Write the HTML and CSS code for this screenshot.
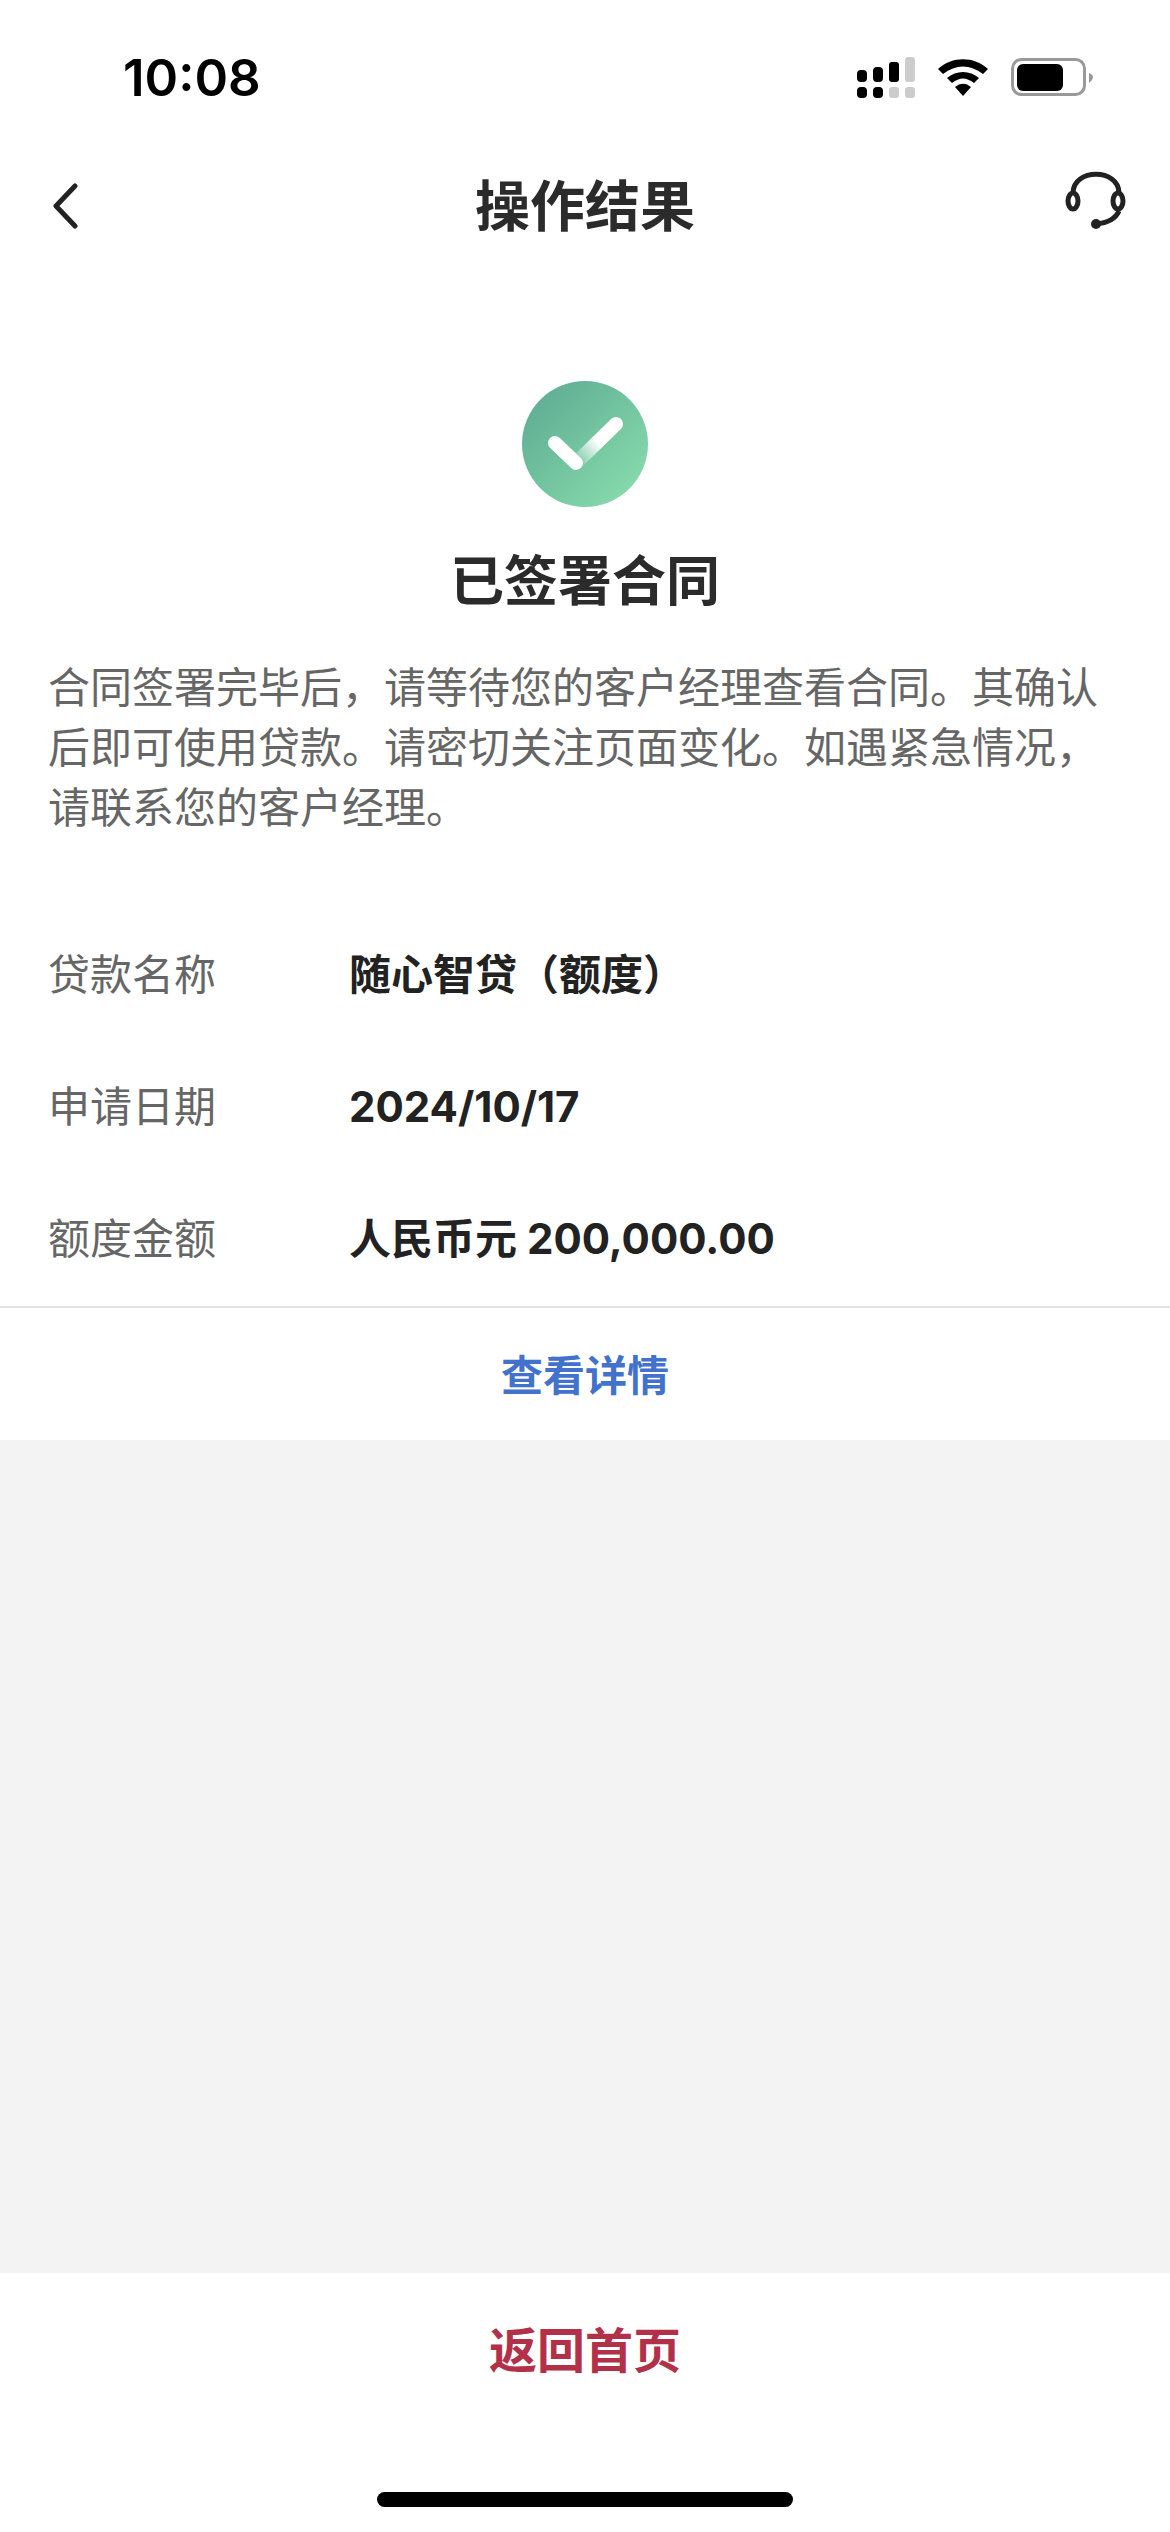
FILE: index.html
```html
<!DOCTYPE html>
<html lang="zh-CN">
<head>
    <meta charset="UTF-8">
    <meta name="viewport" content="width=device-width, initial-scale=1.0">
    <title>操作结果</title>
    <link rel="stylesheet" href="styles.css">
</head>
<body>

<div class="page">
    <div class="status-bar">
        <span class="time">10:08</span>
        <div class="status-icons">
            <svg class="signal" width="58" height="41" viewBox="0 0 58 41">
                <rect x="0" y="13" width="10" height="12" rx="4" fill="#000"/>
                <rect x="16" y="10" width="10" height="15" rx="4" fill="#000"/>
                <rect x="32" y="5" width="10" height="20" rx="3" fill="#000"/>
                <rect x="48" y="0" width="10" height="25" rx="3" fill="#ccc"/>
                <rect x="0" y="30" width="10" height="11" rx="4" fill="#000"/>
                <rect x="16" y="30" width="10" height="11" rx="4" fill="#000"/>
                <rect x="32" y="30" width="10" height="11" rx="3" fill="#ccc"/>
                <rect x="48" y="30" width="10" height="11" rx="3" fill="#ccc"/>
            </svg>
            <svg class="wifi" width="50" height="37" viewBox="0 0 50 37">
                <path d="M0 10 C14 -3 36 -3 50 10 L45 15 C32 5 18 5 5 15 Z" fill="#000"/>
                <path d="M9 19 C18 11 32 11 41 19 L36 24 C28 18 22 18 14 24 Z" fill="#000"/>
                <path d="M17 28 C22 23.500 28 23.500 33 28 L25 37 Z" fill="#000"/>
            </svg>
            <svg class="battery" width="82" height="38" viewBox="0 0 82 38">
                <rect x="1.500" y="1.500" width="72" height="35" rx="9" fill="none" stroke="#999" stroke-width="3"/>
                <rect x="6" y="6" width="46" height="27" rx="6" fill="#000"/>
                <path d="M78 15 C81 16 82 18 82 19 C82 20 81 23 78 25 Z" fill="#999"/>
            </svg>
        </div>
    </div>

    <div class="nav-bar">
        <svg class="back" width="26" height="46" viewBox="0 0 26 46">
            <path d="M23 3 L4 23 L23 43" fill="none" stroke="#222" stroke-width="5" stroke-linecap="round" stroke-linejoin="round"/>
        </svg>
        <h1>操作结果</h1>
        <svg class="service" width="62" height="58" viewBox="0 0 62 58">
            <path d="M8 22 C8 -3 54 -3 54 22" fill="none" stroke="#222" stroke-width="5"/>
            <ellipse cx="8" cy="30" rx="5" ry="8" fill="none" stroke="#222" stroke-width="5"/>
            <ellipse cx="53" cy="30" rx="5" ry="8" fill="none" stroke="#222" stroke-width="5"/>
            <path d="M54 40 C50 49 42 52 31 53" fill="none" stroke="#222" stroke-width="5"/>
            <circle cx="31" cy="53" r="5" fill="#222"/>
        </svg>
    </div>

    <div class="result">
        <svg class="result-icon" width="126" height="126" viewBox="0 0 126 126">
            <defs>
                <linearGradient id="circleFill" x1="0.150" y1="0.150" x2="0.850" y2="0.850">
                    <stop offset="0" stop-color="#62b096"/>
                    <stop offset="1" stop-color="#84d8aa"/>
                </linearGradient>
                <linearGradient id="tickFade" gradientUnits="userSpaceOnUse" x1="54" y1="82" x2="94" y2="43">
                    <stop offset="0" stop-color="#fff" stop-opacity="0"/>
                    <stop offset="0.550" stop-color="#fff"/>
                </linearGradient>
            </defs>
            <circle cx="63" cy="63" r="63" fill="url(#circleFill)"/>
            <path d="M54 82 L94 43" fill="none" stroke="url(#tickFade)" stroke-width="14" stroke-linecap="round"/>
            <path d="M33 62 L54 82" fill="none" stroke="#fff" stroke-width="14" stroke-linecap="round"/>
        </svg>
        <h2>已签署合同</h2>
        <p>合同签署完毕后，请等待您的客户经理查看合同。其确认后即可使用贷款。请密切关注页面变化。如遇紧急情况，请联系您的客户经理。</p>
    </div>

    <div class="details">
        <div class="row">
            <span class="row-label">贷款名称</span>
            <span class="row-value">随心智贷（额度）</span>
        </div>
        <div class="row">
            <span class="row-label">申请日期</span>
            <span class="row-value">2024/10/17</span>
        </div>
        <div class="row">
            <span class="row-label">额度金额</span>
            <span class="row-value">人民币元 200,000.00</span>
        </div>
    </div>

    <div class="detail-link">查看详情</div>

    <div class="filler"></div>

    <div class="footer">
        <div class="home-link">返回首页</div>
        <div class="home-bar"></div>
    </div>
</div>

</body>
</html>
```

FILE: styles.css
```css
body {
    margin: 0;
    background: #fff;
    font-family: Inter, "Noto Sans CJK SC", sans-serif;
    color: #222;
}
.page {
    width: 1170px;
    height: 2532px;
    display: flex;
    flex-direction: column;
    overflow: hidden;
}
.status-bar {
    height: 154px;
    display: flex;
    justify-content: space-between;
    align-items: center;
    padding: 0 77px 0 123px;
}
.time {
    font-size: 51px;
    font-weight: 600;
    color: #000;
}
.status-icons {
    display: flex;
    align-items: center;
    gap: 23px;
}
.nav-bar {
    height: 104px;
    display: grid;
    grid-template-columns: 1fr auto 1fr;
    align-items: center;
    padding: 0 43px;
}
.back {
    margin-left: 9px;
}
.nav-bar h1 {
    margin: 0;
    font-size: 55px;
    font-weight: 700;
    line-height: 1;
    color: #2b2b2b;
}
.service {
    justify-self: end;
    margin-bottom: 12px;
}
.result {
    display: flex;
    flex-direction: column;
    align-items: center;
    padding: 123px 48px 0;
}
.result h2 {
    margin: 35px 0 0;
    font-size: 54px;
    font-weight: 700;
    line-height: 80px;
    color: #2b2b2b;
}
.result p {
    margin: 36px 0 0;
    font-size: 42px;
    line-height: 60px;
    color: #666;
}
.details {
    margin-top: 71px;
    padding: 0 48px 1px;
    border-bottom: 2px solid #e2e2e2;
}
.row {
    display: flex;
    font-size: 42px;
    line-height: 132px;
}
.row-label {
    width: 301px;
    color: #666;
}
.row-value {
    font-weight: 700;
}
.detail-link {
    height: 129px;
    padding-bottom: 3px;
    display: flex;
    justify-content: center;
    align-items: center;
    font-size: 42px;
    font-weight: 700;
    color: #4272cc;
}
.filler {
    flex: 1;
    background: #f3f3f3;
}
.footer {
    height: 259px;
    display: flex;
    flex-direction: column;
    align-items: center;
}
.home-link {
    margin-top: 48px;
    font-size: 48px;
    font-weight: 700;
    line-height: 60px;
    color: #b23048;
}
.home-bar {
    margin-top: 111px;
    width: 416px;
    height: 15px;
    border-radius: 8px;
    background: #000;
}
```
